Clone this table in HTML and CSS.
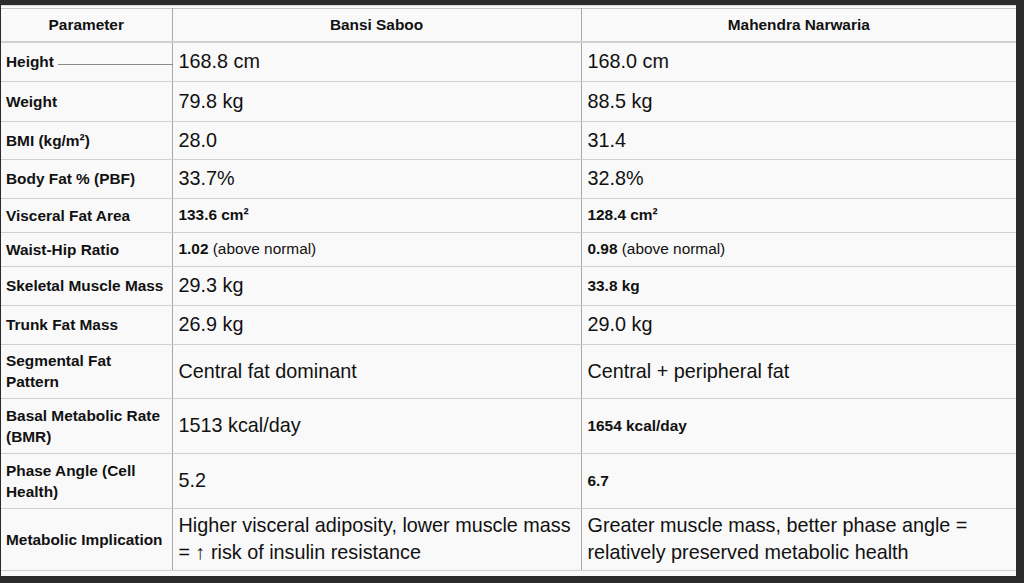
FILE: index.html
```html
<!DOCTYPE html>
<html>
<head>
<meta charset="utf-8">
<link rel="stylesheet" href="styles.css">
</head>
<body>
<div class="frame">
<table class="cmp">
<colgroup><col class="c1"><col class="c2"><col class="c3"></colgroup>
<thead>
<tr class="r-head"><th>Parameter</th><th>Bansi Saboo</th><th>Mahendra Narwaria</th></tr>
</thead>
<tbody>
<tr class="r39"><td class="lab">Height<span class="stray"></span></td><td class="big">168.8 cm</td><td class="big">168.0 cm</td></tr>
<tr class="r40"><td class="lab">Weight</td><td class="big">79.8 kg</td><td class="big">88.5 kg</td></tr>
<tr class="r38"><td class="lab">BMI (kg/m²)</td><td class="big">28.0</td><td class="big">31.4</td></tr>
<tr class="r39"><td class="lab">Body Fat % (PBF)</td><td class="big">33.7%</td><td class="big">32.8%</td></tr>
<tr class="r34"><td class="lab">Visceral Fat Area</td><td class="sm"><b>133.6 cm²</b></td><td class="sm"><b>128.4 cm²</b></td></tr>
<tr class="r34"><td class="lab">Waist-Hip Ratio</td><td class="sm"><b>1.02</b> (above normal)</td><td class="sm"><b>0.98</b> (above normal)</td></tr>
<tr class="r39"><td class="lab">Skeletal Muscle Mass</td><td class="big">29.3 kg</td><td class="sm"><b>33.8 kg</b></td></tr>
<tr class="r39"><td class="lab">Trunk Fat Mass</td><td class="big">26.9 kg</td><td class="big">29.0 kg</td></tr>
<tr class="r54"><td class="lab">Segmental Fat Pattern</td><td class="big">Central fat dominant</td><td class="big">Central + peripheral fat</td></tr>
<tr class="r55"><td class="lab">Basal Metabolic Rate (BMR)</td><td class="big">1513 kcal/day</td><td class="sm"><b>1654 kcal/day</b></td></tr>
<tr class="r55"><td class="lab">Phase Angle (Cell Health)</td><td class="big">5.2</td><td class="sm"><b>6.7</b></td></tr>
<tr class="r62"><td class="lab">Metabolic Implication</td><td class="big">Higher visceral adiposity, lower muscle mass = ↑ risk of insulin resistance</td><td class="big">Greater muscle mass, better phase angle = relatively preserved metabolic health</td></tr>
</tbody>
</table>
</div>
</body>
</html>
```
FILE: styles.css
```css
html, body {
  margin: 0;
  padding: 0;
  background: #2b2b2b;
  height: 583px;
  overflow: hidden;
}
.frame {
  margin: 5px 8px 0 1px;
  height: 571px;
  background: #f9f9f9;
  border-top: 1px solid #d6d6d6;
  padding-top: 2px;
  box-sizing: border-box;
  font-family: "Liberation Sans", Arial, sans-serif;
  color: #111;
}
.cmp {
  width: 100%;
  border-collapse: collapse;
  table-layout: fixed;
  border-top: 1px solid #c8c8c8;
  border-bottom: 1px solid #c8c8c8;
}
.c1 { width: 171px; }
.c2 { width: 409px; }
.cmp th, .cmp td {
  padding: 0 6px;
  border-bottom: 1px solid #cfcfcf;
  border-left: 1px solid #a8a8a8;
  vertical-align: middle;
  text-align: left;
}
.cmp th:first-child, .cmp td:first-child { border-left: none; }
.cmp th {
  font-size: 15.4px;
  font-weight: bold;
  text-align: center;
  height: 32px;
  border-bottom: 2px solid #d0d0d0;
}
.lab {
  font-size: 15.4px;
  font-weight: bold;
  line-height: 21px;
  position: relative;
  padding-left: 5px !important;
}
.big {
  font-size: 19.8px;
  line-height: 27px;
}
.sm {
  font-size: 15.4px;
}
.sm b { font-weight: bold; }
.stray {
  position: absolute;
  left: 57px;
  top: 21px;
  width: 115px;
  height: 1px;
  background: #8a8a8a;
}
.r34 { height: 34px; }
.r38 { height: 38px; }
.r39 { height: 39px; }
.r40 { height: 40px; }
.r54 { height: 54px; }
.r55 { height: 55px; }
.r62 { height: 62px; }
```
